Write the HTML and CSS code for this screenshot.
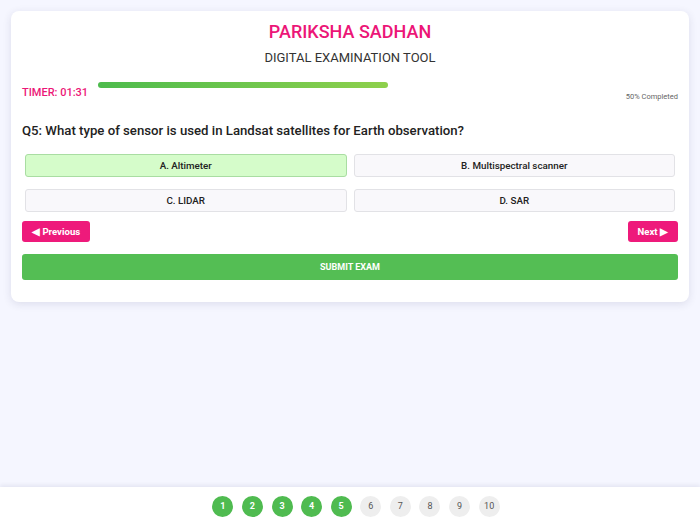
FILE: index.html
```html
<!DOCTYPE html>
<html lang="en">
<head>
	<meta charset="UTF-8">
	<title>Pariksha Sadhan</title>
<link rel="stylesheet" href="styles.css">
</head>
<body>
	<div class="card">
		<h1 class="title">PARIKSHA SADHAN</h1>
		<h2 class="subtitle">DIGITAL EXAMINATION TOOL</h2>
		<div class="status">
			<div class="timer">TIMER: 01:31</div>
			<div class="progress">
				<div class="progress_track">
					<div class="progress_bar" style="width: 50%"></div>
				</div>
				<div class="progress_text">50% Completed</div>
			</div>
		</div>
		<div class="question">Q5: What type of sensor is used in Landsat satellites for Earth observation?</div>
		<div class="options">
			<button class="option selected">A. Altimeter</button>
			<button class="option">B. Multispectral scanner</button>
			<button class="option">C. LIDAR</button>
			<button class="option">D. SAR</button>
		</div>
		<div class="nav">
			<button class="nav_btn">&#9664; Previous</button>
			<button class="nav_btn">Next &#9654;</button>
		</div>
		<button class="submit">SUBMIT EXAM</button>
	</div>
	<div class="footer">
		<span class="dot done">1</span>
		<span class="dot done">2</span>
		<span class="dot done">3</span>
		<span class="dot done">4</span>
		<span class="dot done">5</span>
		<span class="dot">6</span>
		<span class="dot">7</span>
		<span class="dot">8</span>
		<span class="dot">9</span>
		<span class="dot">10</span>
	</div>
</body>
</html>
```

FILE: styles.css
```css
*{
	box-sizing: border-box;
}
html, body{
	margin: 0;
	height: 100%;
}
body{
	background: #f5f6ff;
	font-family: Roboto, "Liberation Sans", sans-serif;
	display: flex;
	flex-direction: column;
	min-height: 100vh;
}
.card{
	margin: 11px 11px 0;
	padding: 10px 11px 22px;
	background: #fff;
	border-radius: 8px;
	box-shadow: 0 2px 8px rgba(40,40,90,0.12);
}
.title{
	margin: 0;
	text-align: center;
	font-size: 18px;
	line-height: 22px;
	font-weight: 500;
	color: #ec1677;
}
.subtitle{
	margin: 7px 0 0;
	text-align: center;
	font-size: 13px;
	line-height: 16px;
	font-weight: 400;
	color: #333;
}
.status{
	display: flex;
	align-items: center;
	gap: 10px;
	margin-top: 16px;
}
.timer{
	font-size: 11px;
	font-weight: 500;
	color: #ec1677;
	white-space: nowrap;
	padding-top: 1px;
}
.progress{
	flex: 1;
}
.progress_track{
	height: 6px;
}
.progress_bar{
	height: 6px;
	border-radius: 3px;
	background: linear-gradient(90deg, #4dbb4d, #8ed04c);
}
.progress_text{
	text-align: right;
	font-size: 7.5px;
	color: #666;
	margin-top: 4px;
	line-height: 10px;
}
.question{
	margin-top: 20px;
	font-size: 13.2px;
	font-weight: 500;
	line-height: 17px;
	color: #222;
}
.options{
	display: grid;
	grid-template-columns: 1fr 1fr;
	column-gap: 7px;
	row-gap: 12px;
	padding: 0 3px;
	margin-top: 15px;
}
.option{
	height: 23px;
	background: #f9f8fb;
	border: 1px solid #e2e2e6;
	border-radius: 3px;
	font-family: Roboto, "Liberation Sans", sans-serif;
	font-size: 9.8px;
	font-weight: 500;
	color: #222;
	padding: 0;
}
.option.selected{
	background: #d5fcca;
	border-color: #a9dda2;
}
.nav{
	display: flex;
	justify-content: space-between;
	margin-top: 9px;
}
.nav_btn{
	height: 21px;
	padding: 0 10px;
	background: #ee1a7b;
	border: none;
	border-radius: 3px;
	color: #fff;
	font-family: Roboto, "Liberation Sans", sans-serif;
	font-size: 9.6px;
	font-weight: 700;
}
.submit{
	display: block;
	width: 100%;
	height: 26px;
	margin-top: 12px;
	background: #54be54;
	border: none;
	border-radius: 3px;
	color: #fff;
	font-family: Roboto, "Liberation Sans", sans-serif;
	font-size: 9px;
	font-weight: 700;
}
.footer{
	margin-top: auto;
	height: 38px;
	background: #fff;
	box-shadow: 0 -2px 4px rgba(40,40,90,0.08);
	display: flex;
	justify-content: center;
	align-items: center;
	gap: 8.6px;
	padding-left: 12px;
}
.dot{
	width: 21px;
	height: 21px;
	border-radius: 50%;
	background: #eeeeee;
	color: #555;
	font-size: 9px;
	display: flex;
	align-items: center;
	justify-content: center;
}
.dot.done{
	background: #4fbb50;
	color: #fff;
	font-weight: 700;
}
```
